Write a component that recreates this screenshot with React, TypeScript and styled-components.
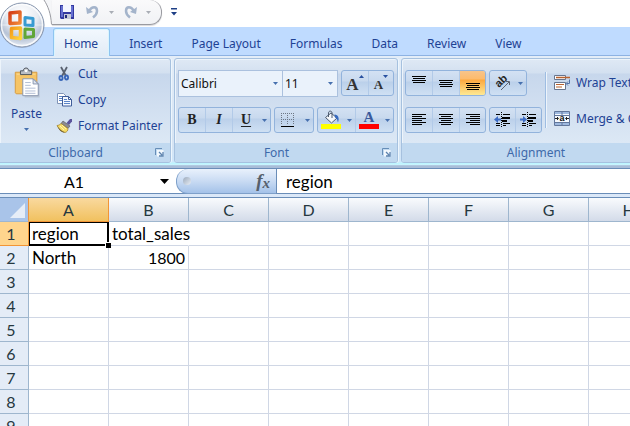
import React from "react";
import styled, { createGlobalStyle, css } from "styled-components";

const GlobalStyle = createGlobalStyle`
  *, *::before, *::after { box-sizing: border-box; }
  body { margin: 0; overflow: hidden; background: #fff; }
  button, input, select { font: inherit; color: inherit; margin: 0; padding: 0; border: 0; background: none; }
  svg { display: block; flex: none; overflow: visible; }
`;

const UI_FONT = '"Noto Sans", "Open Sans", sans-serif';
const CELL_FONT = '"Lato", "Liberation Sans", sans-serif';

const Window = styled.div`
  position: relative;
  display: flex;
  flex-direction: column;
  height: 100vh;
  overflow: hidden;
  font-family: ${UI_FONT};
  font-size: 12px;
  line-height: 16px;
  color: #1e4294;
`;

/* Title area */
const TitleBar = styled.header`
  display: flex;
  flex: none;
  height: 27px;
  padding-left: 44px;
`;
const QuickAccess = styled.div`
  display: flex;
  align-items: center;
  width: 110px;
  height: 25px;
  padding-left: 8px;
  border-bottom: 1px solid #999aa0;
  border-right: 1px solid #999aa0;
  border-radius: 0 12px 12px 0;
  background: linear-gradient(#fafafb, #f1f2f5);
  box-shadow: 0 1px 1px #d9d9dc;
`;
const QuickEdge = styled.svg`
  background: #fff;
`;
const QuickButton = styled.button<{ $w: number }>`
  display: flex;
  align-items: center;
  justify-content: center;
  width: ${(p) => p.$w}px;
  height: 24px;
`;
const OfficeButton = styled.button`
  position: absolute;
  z-index: 2;
  top: 1px;
  left: -1px;
  width: 46px;
  height: 48px;
`;

/* Tabs */
const TabStrip = styled.nav`
  display: flex;
  flex: none;
  gap: 8px;
  height: 29px;
  padding: 1px 0 0 53px;
  background: #bfdbff;
  border-bottom: 1px solid #8db2e3;
`;
const Tab = styled.button<{ $active?: boolean }>`
  flex: none;
  height: 28px;
  padding: 3px 10px 0 11px;
  white-space: nowrap;
  ${(p) =>
    p.$active &&
    css`
      border: 1px solid #8fc4f0;
      border-bottom: 0;
      border-radius: 3px 3px 0 0;
      padding: 2px 11px 0 10px;
      background: linear-gradient(#f2f8fe, #e1ebf6);
      box-shadow: inset 1px 1px 0 #d9f4fe, inset -1px 0 0 #d9f4fe;
    `}
`;

/* Ribbon */
const Ribbon = styled.section`
  display: flex;
  flex: none;
  gap: 3px;
  height: 112px;
  padding: 2px 0 5px;
  overflow: hidden;
  background: linear-gradient(#e3edf8, #d5e4f4 80%, #cfe6fa 94%, #bdf5ff 96%, #c9f3fd 97%, #a9bdd8 98%);
`;
const Group = styled.div<{ $w: number; $first?: boolean }>`
  display: flex;
  flex-direction: column;
  flex: none;
  width: ${(p) => p.$w}px;
  border: 1px solid #a6c1df;
  border-left-width: ${(p) => (p.$first ? 0 : 1)}px;
  border-radius: ${(p) => (p.$first ? "0 3px 3px 0" : "3px")};
  overflow: hidden;
  background: linear-gradient(#dfe9f5, #d3e0f0 14px, #c7d7ec 15px, #dce8f5 84px);
  box-shadow: inset 1px 1px 0 #edf4fb, 1px 0 0 #edf6fd;
`;
const GroupBody = styled.div`
  display: flex;
  flex: 1;
  min-height: 0;
`;
const Caption = styled.div`
  display: flex;
  align-items: center;
  height: 19px;
  padding-right: 3px;
  background: #c1d9f0;
  color: #3e6aaa;
`;
const CaptionText = styled.span`
  flex: 1;
  text-align: center;
`;
const Launcher = styled.button`
  display: flex;
  justify-content: center;
  width: 16px;
`;
const PasteButton = styled.button`
  display: flex;
  flex-direction: column;
  align-items: center;
  width: 53px;
  padding-top: 9px;
`;
const PasteLabel = styled.span`
  margin: 8px 0 6px;
`;
const CommandList = styled.div`
  display: flex;
  flex-direction: column;
  padding: 2px 0 0 3px;
`;
const Command = styled.button`
  display: flex;
  align-items: center;
  gap: 5px;
  height: 26px;
  white-space: nowrap;
`;
const ToolRows = styled.div`
  display: flex;
  flex-direction: column;
  gap: 10px;
  padding: 11px 3px 0;
`;
const ToolRow = styled.div`
  display: flex;
  gap: 3px;
  height: 27px;
`;
const ButtonSet = styled.div`
  display: flex;
  height: 26px;
  border: 1px solid #92b3dc;
  border-radius: 3px;
  overflow: hidden;
  background: linear-gradient(#d3e1f3, #c8d9ee 10px, #bbd0ea 11px, #cfe0f3);
`;
const ToolButton = styled.button<{ $w: number; $pressed?: boolean; $plain?: boolean }>`
  display: flex;
  align-items: center;
  justify-content: center;
  width: ${(p) => p.$w}px;
  border-left: ${(p) => (p.$plain ? "0" : "1px solid #b2cae8")};
  &:first-child { border-left: 0; }
  ${(p) =>
    p.$pressed &&
    css`
      background: linear-gradient(#f7c48b, #fdbb6c 8px, #fca840 9px, #fee993);
    `}
`;
const Glyph = styled.span<{ $kind: "b" | "i" | "u" }>`
  font-family: "Liberation Serif", serif;
  font-size: 14px;
  font-weight: bold;
  color: #222;
  font-style: ${(p) => (p.$kind === "i" ? "italic" : "normal")};
  text-decoration: ${(p) => (p.$kind === "u" ? "underline" : "none")};
  text-underline-offset: 2px;
`;
const SizeGlyph = styled.span<{ $size: number }>`
  display: flex;
  align-items: flex-end;
  height: 20px;
  font-family: "Liberation Serif", serif;
  font-size: ${(p) => p.$size}px;
  font-weight: bold;
  color: #333;
  svg { align-self: flex-start; margin-top: 2px; }
`;
const Combo = styled.label<{ $w: number }>`
  display: flex;
  align-items: center;
  width: ${(p) => p.$w}px;
  height: 27px;
  padding-right: 4px;
  border: 1px solid #abc1de;
  background: #eaf2fb;
  color: #111;
  select {
    flex: 1;
    min-width: 0;
    padding-left: 2px;
    appearance: none;
    outline: 0;
  }
  & + & { margin-left: -4px; }
`;
const Divider = styled.div`
  width: 2px;
  height: 56px;
  margin: 13px 7px 0 0;
  background: #9ebde2;
  border-right: 1px solid #edf4fb;
`;
const AlignCommands = styled.div`
  display: flex;
  flex-direction: column;
  gap: 10px;
  padding-top: 11px;
`;

/* Formula bar */
const FormulaBar = styled.div`
  display: flex;
  flex: none;
  height: 30px;
  border-top: 1px solid #6a8db8;
  border-bottom: 1px solid #6a8db8;
  background: linear-gradient(#fff 24px, #6a8db8 24px, #6a8db8 25px, #dbe8f8 25px);
  padding-bottom: 4px;
  font-family: ${CELL_FONT};
  font-size: 16px;
  color: #000;
`;
const NameBox = styled.label`
  display: flex;
  align-items: center;
  width: 176px;
  padding-right: 7px;
  input {
    flex: 1;
    min-width: 0;
    padding-right: 12px;
    text-align: center;
    outline: 0;
  }
`;
const FxTray = styled.div`
  display: flex;
  align-items: center;
  justify-content: space-between;
  width: 101px;
  height: 25px;
  padding: 0 6px;
  border: 1px solid #7ea0ca;
  border-right-color: #6a8db8;
  border-top: 0;
  border-radius: 12px 0 0 12px;
  background: linear-gradient(#e9f1fc, #c9dbf3 50%, #a4c2e9);
`;
const Knob = styled.span`
  width: 8px;
  height: 8px;
  border-radius: 50%;
  background: linear-gradient(135deg, #9ba9bb, #e8eef6);
`;
const FxButton = styled.button`
  display: flex;
  align-items: center;
  font-family: "Liberation Serif", serif;
  font-size: 19px;
  line-height: 22px;
  font-style: italic;
  font-weight: bold;
  color: #56606c;
`;
const FxSmall = styled.span`
  padding-top: 4px;
  font-size: 15px;
  line-height: 16px;
`;
const FormulaInput = styled.input`
  && {
    flex: 1;
    min-width: 0;
    padding-left: 9px;
    font-size: 17px;
    outline: 0;
  }
`;

/* Worksheet */
const Sheet = styled.div`
  flex: 1;
  min-height: 0;
  overflow: auto;
  scrollbar-width: none;
  background: #fff;
`;
const Grid = styled.table`
  table-layout: fixed;
  width: 1309px;
  border-collapse: separate;
  border-spacing: 0;
  font-family: ${CELL_FONT};
  font-size: 16px;
  line-height: 22px;
  color: #000;
`;
const HeadCol = styled.col`
  width: 29px;
`;
const Col = styled.col`
  width: 80px;
`;
const Corner = styled.td`
  height: 24px;
  padding: 0;
  background: #a9c4e9;
  border-right: 1px solid #f0953c;
  border-bottom: 1px solid #9eb6ce;
`;
const CornerArt = styled.svg`
  margin: 3px 3px 1px auto;
`;
const ColHead = styled.th<{ $on?: boolean }>`
  height: 24px;
  padding: 1px 0 0;
  font-weight: normal;
  color: #26383f;
  border-right: 1px solid ${(p) => (p.$on ? "#f29536" : "#9eb6ce")};
  border-bottom: 1px solid ${(p) => (p.$on ? "#f29536" : "#9eb6ce")};
  background: ${(p) =>
    p.$on ? "linear-gradient(#f9d99f, #f1c15f)" : "linear-gradient(#f9fbfd, #d3dbe9)"};
`;
const RowHead = styled.th<{ $on?: boolean }>`
  height: 24px;
  padding: 1px 6px 0 0;
  font-weight: normal;
  color: #26383f;
  border-right: 1px solid ${(p) => (p.$on ? "#f29536" : "#9eb6ce")};
  border-bottom: 1px solid ${(p) => (p.$on ? "#f29536" : "#9eb6ce")};
  background: ${(p) => (p.$on ? "#ffd58d" : "#e4ecf7")};
`;
const Cell = styled.td<{ $number?: boolean; $spill?: boolean; $on?: boolean }>`
  position: relative;
  height: 24px;
  padding: 1px 3px 0;
  white-space: nowrap;
  text-align: ${(p) => (p.$number ? "right" : "left")};
  font-size: ${(p) => (p.$number ? 16 : 17)}px;
  border-right: 1px solid ${(p) => (p.$spill ? "transparent" : "#d0d7e5")};
  border-bottom: 1px solid #d0d7e5;
  ${(p) =>
    p.$on &&
    css`
      &::before {
        content: "";
        position: absolute;
        inset: 0 -1px -1px 0;
        border: 2px solid #000;
        border-width: 1px 2px 2px 1px;
      }
      &::after {
        content: "";
        position: absolute;
        z-index: 1;
        right: -3px;
        bottom: -3px;
        width: 6px;
        height: 6px;
        background: #000;
        border: 1px solid #fff;
        border-width: 1px 0 0 1px;
      }
    `}
`;

const Arrow = ({ w = 5, color = "#4670ae", up = false }: { w?: number; color?: string; up?: boolean }) => (
  <svg width={w} height={Math.ceil(w / 2)} viewBox="0 0 6 3" preserveAspectRatio="none" aria-hidden="true">
    <path d={up ? "M0 3h6L3 0z" : "M0 0h6L3 3z"} fill={color} />
  </svg>
);

const OfficeLogo = () => (
  <svg width="46" height="48" viewBox="0 0 46 48" aria-hidden="true">
    <defs>
      <radialGradient id="orb" cx=".5" cy=".25" r=".8">
        <stop offset="0" stopColor="#fff" />
        <stop offset=".45" stopColor="#e7ebf2" />
        <stop offset=".7" stopColor="#b7c3d6" />
        <stop offset="1" stopColor="#f7fbff" />
      </radialGradient>
      <linearGradient id="red" x2="1" y2="1">
        <stop stopColor="#d33b16" />
        <stop offset="1" stopColor="#f28a38" />
      </linearGradient>
      <linearGradient id="yel" x2="1" y2="1">
        <stop stopColor="#f39a19" />
        <stop offset="1" stopColor="#ffd43c" />
      </linearGradient>
    </defs>
    <circle cx="23" cy="25" r="22" fill="#8d9aaf" opacity=".5" />
    <circle cx="23" cy="24" r="22" fill="url(#orb)" stroke="#8796ae" />
    <circle cx="23" cy="24" r="20.5" fill="none" stroke="#fff" strokeWidth="1.5" opacity=".8" />
    <path d="M2 24h42" stroke="#fff" opacity=".5" />
    <g fill="none" strokeLinejoin="round">
      <path d="M11 12l10-1v11l-10 .5z" stroke="url(#red)" strokeWidth="3.500" />
      <path d="M26 16.500l8 1v7l-8-.5z" stroke="#389bd1" strokeWidth="3" />
      <path d="M12.500 27.500l9-.5v10.500l-9-1z" stroke="url(#yel)" strokeWidth="3.500" />
      <path d="M26 28l8.500 .5v7l-8.500 1z" stroke="#60a638" strokeWidth="3" />
    </g>
  </svg>
);

const SaveIcon = () => (
  <svg width="14" height="14" viewBox="0 0 14 14" aria-hidden="true">
    <path d="M0 0h14v14H1l-1-1z" fill="#3339a0" />
    <path d="M1 1h2v11H1zM11 1h2v11h-2z" fill="#6670d0" />
    <path d="M3 0h8v7H3z" fill="#f4f6ff" />
    <path d="M4 9h7v5H4z" fill="#c6cbd8" />
    <path d="M5 10h2v3H5z" fill="#222a78" />
  </svg>
);

const UndoIcon = ({ flip = false }: { flip?: boolean }) => (
  <svg width="13" height="14" viewBox="0 0 13 14" aria-hidden="true">
    <g transform={flip ? "matrix(-1 0 0 1 13 0)" : undefined}>
      <path d="M3 6C6 1 11 1 11 6c0 3-2 5-4 6.500" fill="none" stroke="#a4b4cb" strokeWidth="2.500" />
      <path d="M0 2l1 7 6-2z" fill="#a4b4cb" />
    </g>
  </svg>
);

const MenuIcon = () => (
  <svg width="6" height="8" viewBox="0 0 6 8" aria-hidden="true">
    <path d="M0 0h6v1.500H0zM0 4h6L3 7.500z" fill="#1e3f86" />
  </svg>
);

const PasteIcon = () => (
  <svg width="28" height="30" viewBox="0 0 28 32" aria-hidden="true">
    <path d="M1.500 4.500h23v23h-22l-1-1z" fill="#f6c465" stroke="#d79a3b" />
    <path d="M3 6h20v1H3z" fill="#fde2a4" />
    <path d="M7 3h3c0-4 6-4 6 0h3v4H7z" fill="#b9bdc4" stroke="#4c525c" />
    <circle cx="13" cy="3" r="1.500" fill="#fff" />
    <path d="M10.500 11.500h11l5 5v14h-16z" fill="#b3bccb" transform="translate(1 1)" opacity=".7" />
    <path d="M9.500 11.500h11l5.500 5.500v12.500H9.500z" fill="#fff" stroke="#8593ad" />
    <path d="M20.500 11.500V17H26z" fill="#dfe5ef" stroke="#8593ad" />
    <path d="M12 15.500h6M12 18.500h6M12 21.500h11M12 24.500h11M12 27h11" stroke="#aebbd2" />
  </svg>
);

const CutIcon = () => (
  <svg width="17" height="16" viewBox="0 0 17 16" aria-hidden="true">
    <path d="M5 1l5 9M11 1L6 10" stroke="#59616f" strokeWidth="1.800" fill="none" />
    <g fill="none" stroke="#3765b8" strokeWidth="1.800">
      <ellipse cx="5" cy="12" rx="1.600" ry="2" />
      <ellipse cx="10.500" cy="11.500" rx="1.600" ry="2" />
    </g>
  </svg>
);

const CopyIcon = () => (
  <svg width="17" height="16" viewBox="0 0 17 16" aria-hidden="true">
    <path d="M1.500 1.500h6l3 3v7h-9z" fill="#fff" stroke="#8094b7" />
    <path d="M3 4.500h4M3 6.500h5M3 8.500h5" stroke="#5b85c8" />
    <path d="M6.500 4.500h6l3 3v6.500h-9z" fill="#f4f8ff" stroke="#3f5d99" />
    <path d="M12.500 4.500v3h3" fill="none" stroke="#3f5d99" />
    <path d="M8 7.500h3M8 9.500h6M8 11.500h6" stroke="#5b85c8" />
  </svg>
);

const PainterIcon = () => (
  <svg width="17" height="16" viewBox="0 0 17 16" aria-hidden="true">
    <path d="M10.500 5L14 1h2v2.500L13 7z" fill="#5b559c" />
    <path d="M7 3l7 5-2 2.500-7-5z" fill="#8c8b91" stroke="#55545b" strokeWidth=".6" />
    <path d="M5 5.500l7 5c0 2-1 3.500-3 4C5 13 3 11 1 7.500c1.500 0 3-1 4-2z" fill="#f6dc67" stroke="#9e7b22" strokeWidth=".7" />
    <path d="M4 8l4 4M6 7l4 4" stroke="#fff3ad" />
    <path d="M1 7.500c2 3.500 4 5.500 8 7-3 .5-6-2-8-7z" fill="#64501d" />
  </svg>
);

const LauncherIcon = () => (
  <svg width="9" height="9" viewBox="0 0 9 9" aria-hidden="true">
    <path d="M.5 7V.5H7" fill="none" stroke="#668eb8" />
    <path d="M2 2h6.500v6.500H2z" fill="#f2f8fd" />
    <path d="M4 4l3 3M8 4v4H4" fill="none" stroke="#5c83af" strokeWidth="1.300" />
  </svg>
);

const BorderIcon = () => (
  <svg width="14" height="14" viewBox="0 0 14 14" aria-hidden="true">
    <path d="M.5 0v12M6.500 0v12M12.500 0v12M0 .5h13M0 6.500h13" stroke="#6d7684" strokeDasharray="1 1" />
    <path d="M0 13h13" stroke="#000" strokeWidth="1" shapeRendering="crispEdges" />
  </svg>
);

const FillIcon = () => (
  <svg width="20" height="18" viewBox="0 0 20 18" aria-hidden="true">
    <path d="M4.500 6.500L10 2l6 5-5.500 5z" fill="#f5f8fc" stroke="#4e5c70" />
    <path d="M7.500 6V2c0-2.500 3.500-2.500 3.500 0v5" fill="none" stroke="#4e5c70" />
    <path d="M13.500 3.500c4 0 5 4 3.500 8-1-2.500-.5-4-3-5z" fill="#366ac0" />
    <path d="M0 13h20v5H0z" fill="#ff0" />
  </svg>
);

const FontColorIcon = () => (
  <svg width="20" height="18" viewBox="0 0 20 18" aria-hidden="true">
    <text x="10" y="11" textAnchor="middle" fontFamily="Liberation Serif" fontWeight="bold" fontSize="15" fill="#3a5a9c">A</text>
    <path d="M0 13h20v5H0z" fill="#f00" />
  </svg>
);

type LinesKind = "top" | "middle" | "bottom" | "left" | "center" | "right";
const LinesIcon = ({ kind }: { kind: LinesKind }) => {
  const vertical = kind === "top" || kind === "middle" || kind === "bottom";
  const start = kind === "top" ? 1 : kind === "middle" ? 5 : 8;
  const lines = vertical
    ? [0, 1, 2, 3].map((i) => (i % 2 ? [1, start + i * 2, 12] : [0, start + i * 2, 14]))
    : [0, 1, 2, 3, 4, 5].map((i) => {
        const w = i % 2 ? 10 : 14;
        const x = kind === "left" ? 0 : kind === "right" ? 14 - w : (14 - w) / 2;
        return [x, 2 + i * 2, w];
      });
  return (
    <svg width="14" height="16" viewBox="0 0 14 16" shapeRendering="crispEdges" aria-hidden="true">
      {lines.map(([x, y, w]) => (
        <rect key={y} x={x} y={y} width={w} height="1" fill="#000" />
      ))}
    </svg>
  );
};

const IndentIcon = ({ more = false }: { more?: boolean }) => (
  <svg width="17" height="16" viewBox="0 0 17 16" aria-hidden="true">
    <path d="M2 2.500h4M9 2.500h7M2 11.500h4M9 11.500h7M2 13.500h4M9 13.500h3" stroke="#000" />
    <path d="M8 5h8v2H8zM8 8h5v2H8z" fill="#000" />
    <path d="M7.500 0v16" stroke="#000" strokeDasharray="1 1" />
    <path d={more ? "M0 6.500h3V4l4 3.500L3 11V8.500H0z" : "M7 6.500H4V4L0 7.500 4 11V8.500h3z"} fill="#3c6bc4" />
  </svg>
);

const OrientationIcon = () => (
  <svg width="17" height="16" viewBox="0 0 17 16" aria-hidden="true">
    <text transform="translate(5 13) rotate(-45)" fontFamily="Liberation Sans" fontWeight="bold" fontSize="11" fill="#222">ab</text>
    <path d="M7 15l8-8M11.500 6.500H15.500V10" fill="none" stroke="#5b6270" />
  </svg>
);

const WrapIcon = () => (
  <svg width="17" height="16" viewBox="0 0 17 16" aria-hidden="true">
    <path d="M.5.5h11v4H.5zM.5 7.500h11v7H.5z" fill="#fff" stroke="#67758e" />
    <path d="M2 2.500h14" stroke="#b8622f" strokeWidth="1.300" />
    <path d="M2 9.500h8M2 12h6" stroke="#b8622f" />
    <path d="M15.500 4.500v4h-3M14 6.500l-2 2 2 2" fill="none" stroke="#5273a8" />
  </svg>
);

const MergeIcon = () => (
  <svg width="17" height="16" viewBox="0 0 17 16" aria-hidden="true">
    <path d="M.5.5h15v14H.5z" fill="#f5f9ff" stroke="#62779c" />
    <path d="M1 1h14v2H1zM1 12h14v2H1z" fill="#9eb9df" />
    <path d="M8 1v3M8 11v3M1 4.500h14M1 11.500h14" stroke="#62779c" />
    <text x="8" y="10" textAnchor="middle" fontFamily="Liberation Sans" fontWeight="bold" fontSize="9" fill="#111">a</text>
    <path d="M1 7.500h3M3 6l1.500 1.500L3 9M15 7.500h-3M13 6l-1.500 1.500L13 9" fill="none" stroke="#222" />
  </svg>
);

const tabs = ["Home", "Insert", "Page Layout", "Formulas", "Data", "Review", "View"];
const columns = "ABCDEFGHIJKLMNOP".split("");
const rows = Array.from({ length: 30 }, (_, i) => i + 1);
const values: Record<string, string | number> = { A1: "region", B1: "total_sales", A2: "North", B2: 1800 };

export default function App() {
  return (
    <Window>
      <GlobalStyle />
      <TitleBar>
        <OfficeButton aria-label="Office Button"><OfficeLogo /></OfficeButton>
        <QuickEdge width="8" height="26" viewBox="0 0 8 26" aria-hidden="true">
          <path d="M0 0C4 6 7 14 7.500 24.500H8V0z" fill="#f5f6f8" />
          <path d="M0 0C4 6 7 14 7.500 24.500" fill="none" stroke="#999aa0" />
        </QuickEdge>
        <QuickAccess>
          <QuickButton $w={14} aria-label="Save"><SaveIcon /></QuickButton>
          <QuickButton $w={37} aria-label="Undo"><UndoIcon /></QuickButton>
          <QuickButton $w={1} aria-label="Undo options"><Arrow color="#a9adb5" /></QuickButton>
          <QuickButton $w={36} aria-label="Redo"><UndoIcon flip /></QuickButton>
          <QuickButton $w={1} aria-label="Redo options"><Arrow color="#a9adb5" /></QuickButton>
        </QuickAccess>
        <QuickButton $w={24} aria-label="Customize toolbar"><MenuIcon /></QuickButton>
      </TitleBar>

      <TabStrip>
        {tabs.map((t) => (
          <Tab key={t} $active={t === "Home"}>{t}</Tab>
        ))}
      </TabStrip>

      <Ribbon>
        <Group $w={171} $first>
          <GroupBody>
            <PasteButton>
              <PasteIcon />
              <PasteLabel>Paste</PasteLabel>
              <Arrow />
            </PasteButton>
            <CommandList>
              <Command><CutIcon />Cut</Command>
              <Command><CopyIcon />Copy</Command>
              <Command><PainterIcon />Format Painter</Command>
            </CommandList>
          </GroupBody>
          <Caption>
            <CaptionText>Clipboard</CaptionText>
            <Launcher aria-label="Clipboard options"><LauncherIcon /></Launcher>
          </Caption>
        </Group>

        <Group $w={224}>
          <GroupBody>
            <ToolRows>
              <ToolRow>
                <Combo $w={105}>
                  <select aria-label="Font" defaultValue="Calibri"><option>Calibri</option></select>
                  <Arrow />
                </Combo>
                <Combo $w={56}>
                  <select aria-label="Font size" defaultValue="11"><option>11</option></select>
                  <Arrow />
                </Combo>
                <ButtonSet>
                  <ToolButton $w={26} aria-label="Grow font"><SizeGlyph $size={17}>A<Arrow up color="#2850a0" /></SizeGlyph></ToolButton>
                  <ToolButton $w={25} aria-label="Shrink font"><SizeGlyph $size={13}>A<Arrow color="#2850a0" /></SizeGlyph></ToolButton>
                </ButtonSet>
              </ToolRow>
              <ToolRow>
                <ButtonSet>
                  <ToolButton $w={26} aria-label="Bold"><Glyph $kind="b">B</Glyph></ToolButton>
                  <ToolButton $w={27} aria-label="Italic"><Glyph $kind="i">I</Glyph></ToolButton>
                  <ToolButton $w={27} aria-label="Underline"><Glyph $kind="u">U</Glyph></ToolButton>
                  <ToolButton $w={11} $plain aria-label="Underline options"><Arrow /></ToolButton>
                </ButtonSet>
                <ButtonSet>
                  <ToolButton $w={26} aria-label="Borders"><BorderIcon /></ToolButton>
                  <ToolButton $w={12} $plain aria-label="Border options"><Arrow /></ToolButton>
                </ButtonSet>
                <ButtonSet>
                  <ToolButton $w={26} aria-label="Fill color"><FillIcon /></ToolButton>
                  <ToolButton $w={11} $plain aria-label="Fill color options"><Arrow /></ToolButton>
                  <ToolButton $w={26} aria-label="Font color"><FontColorIcon /></ToolButton>
                  <ToolButton $w={12} $plain aria-label="Font color options"><Arrow /></ToolButton>
                </ButtonSet>
              </ToolRow>
            </ToolRows>
          </GroupBody>
          <Caption>
            <CaptionText>Font</CaptionText>
            <Launcher aria-label="Font options"><LauncherIcon /></Launcher>
          </Caption>
        </Group>

        <Group $w={289}>
          <GroupBody>
            <ToolRows>
              <ToolRow>
                <ButtonSet>
                  <ToolButton $w={26} aria-label="Top align"><LinesIcon kind="top" /></ToolButton>
                  <ToolButton $w={27} aria-label="Middle align"><LinesIcon kind="middle" /></ToolButton>
                  <ToolButton $w={26} $pressed aria-pressed="true" aria-label="Bottom align"><LinesIcon kind="bottom" /></ToolButton>
                </ButtonSet>
                <ButtonSet>
                  <ToolButton $w={24} aria-label="Orientation"><OrientationIcon /></ToolButton>
                  <ToolButton $w={12} $plain aria-label="Orientation options"><Arrow /></ToolButton>
                </ButtonSet>
              </ToolRow>
              <ToolRow>
                <ButtonSet>
                  <ToolButton $w={26} aria-label="Align left"><LinesIcon kind="left" /></ToolButton>
                  <ToolButton $w={27} aria-label="Align center"><LinesIcon kind="center" /></ToolButton>
                  <ToolButton $w={26} aria-label="Align right"><LinesIcon kind="right" /></ToolButton>
                </ButtonSet>
                <ButtonSet>
                  <ToolButton $w={25} aria-label="Decrease indent"><IndentIcon /></ToolButton>
                  <ToolButton $w={26} aria-label="Increase indent"><IndentIcon more /></ToolButton>
                </ButtonSet>
              </ToolRow>
            </ToolRows>
            <Divider />
            <AlignCommands>
              <Command><WrapIcon />Wrap Text</Command>
              <Command><MergeIcon />Merge &amp; Center</Command>
            </AlignCommands>
          </GroupBody>
          <Caption>
            <CaptionText>Alignment</CaptionText>
            <Launcher aria-label="Alignment options"><LauncherIcon /></Launcher>
          </Caption>
        </Group>
      </Ribbon>

      <FormulaBar>
        <NameBox>
          <input aria-label="Name box" defaultValue="A1" />
          <Arrow w={9} color="#000" />
        </NameBox>
        <FxTray>
          <Knob />
          <FxButton aria-label="Insert function">f<FxSmall>x</FxSmall></FxButton>
        </FxTray>
        <FormulaInput aria-label="Formula" defaultValue="region" />
      </FormulaBar>

      <Sheet>
        <Grid>
          <colgroup>
            <HeadCol />
            {columns.map((c) => <Col key={c} />)}
          </colgroup>
          <thead>
            <tr>
              <Corner>
                <CornerArt width="16" height="17" viewBox="0 0 16 17" aria-hidden="true">
                  <path d="M16 1v15H1z" fill="#e6edf7" />
                </CornerArt>
              </Corner>
              {columns.map((c) => <ColHead key={c} scope="col" $on={c === "A"}>{c}</ColHead>)}
            </tr>
          </thead>
          <tbody>
            {rows.map((r) => (
              <tr key={r}>
                <RowHead scope="row" $on={r === 1}>{r}</RowHead>
                {columns.map((c) => {
                  const id = c + r;
                  return (
                    <Cell key={id} $on={id === "A1"} $spill={id === "B1"} $number={typeof values[id] === "number"}>
                      {values[id]}
                    </Cell>
                  );
                })}
              </tr>
            ))}
          </tbody>
        </Grid>
      </Sheet>
    </Window>
  );
}
